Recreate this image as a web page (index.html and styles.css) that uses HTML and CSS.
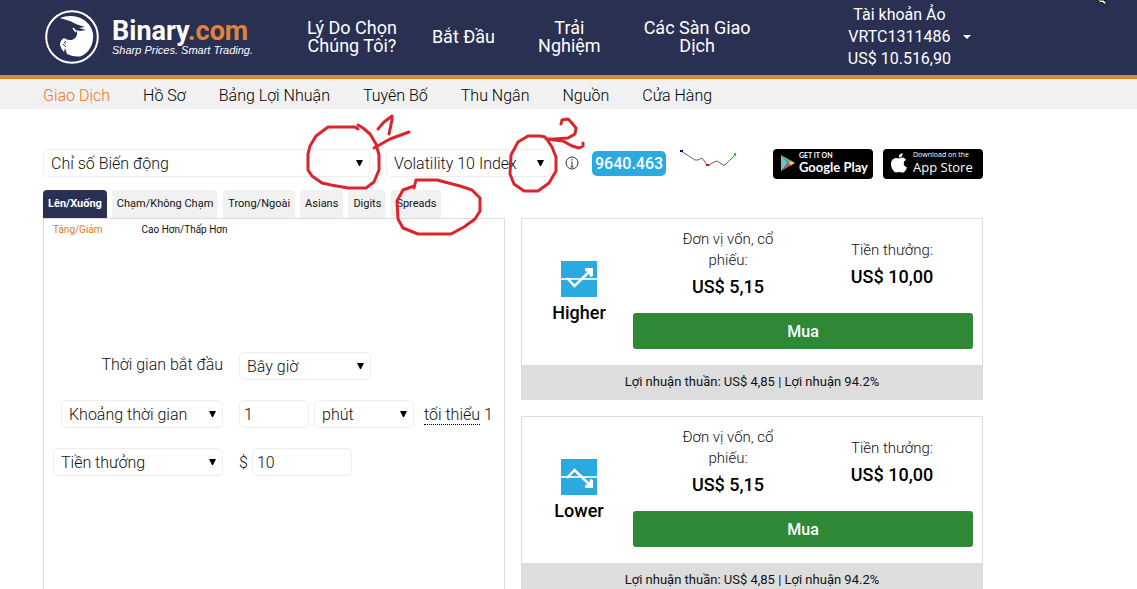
FILE: index.html
```html
<!DOCTYPE html>
<html lang="vi">
<head>
<meta charset="utf-8">
<title>Binary.com</title>
<link rel="stylesheet" href="styles.css">
</head>
<body>
<header class="header">
  <a class="logo" href="#">
    <svg class="logo-mark" viewBox="0 0 54 54" aria-hidden="true">
      <circle cx="27" cy="27" r="25.8" fill="none" stroke="#fff" stroke-width="2"/>
      <path fill="#fff" d="M15 8C22 5 32 5 39 10C46 15 49 22 48 29C47 38 42 44 35 46.500Q28 47 22 44L20 38L19 42Q16 39 15 35Q15 30 19 28Q23 31 28 29.500Q33 27 32 22L31 20L35 21L41 20L34 18L40 17L32 14.500Q24 10 15 8Z"/>
      <path d="M18 34l3 3M20 31v3" stroke="#2a3052" stroke-width="1"/>
      <path d="M28 18l3 4" stroke="#fff" stroke-width="1.500"/>
    </svg>
    <span class="logo-text">
      <span class="logo-name">Binary<span class="logo-com">.com</span></span>
      <span class="logo-tag">Sharp Prices. Smart Trading.</span>
    </span>
  </a>
  <nav class="main-nav">
    <a href="#">Lý Do Chọn<br>Chúng Tôi?</a>
    <a href="#">Bắt Đầu</a>
    <a href="#">Trải<br>Nghiệm</a>
    <a href="#">Các Sàn Giao<br>Dịch</a>
  </nav>
  <button class="account" type="button">
    <span class="account-text">Tài khoản Ảo<br>VRTC1311486<br>US$ 10.516,90</span>
    <span class="caret"></span>
  </button>
</header>
<nav class="sub-nav">
  <a class="active" href="#">Giao Dịch</a>
  <a href="#">Hồ Sơ</a>
  <a href="#">Bảng Lợi Nhuận</a>
  <a href="#">Tuyên Bố</a>
  <a href="#">Thu Ngân</a>
  <a href="#">Nguồn</a>
  <a href="#">Cửa Hàng</a>
</nav>
<main class="content">
  <div class="market-row">
    <div class="market-pick">
      <select class="field" aria-label="Thị trường"><option>Chỉ số Biến động</option></select>
    </div>
    <div class="underlying">
      <select class="field underlying-pick" aria-label="Tài sản"><option>Volatility 10 Index</option></select>
      <svg class="info" viewBox="0 0 14 14" aria-hidden="true"><circle cx="7" cy="7" r="6" fill="none" stroke="#333"/><path d="M7 3v1.500M6 6H7v5M5.500 11h3" fill="none" stroke="#333"/></svg>
      <span class="spot">9640.463</span>
      <svg class="spark" viewBox="0 0 60 20" aria-hidden="true">
        <path d="M3 3L17 12H20L24 10L29 17H31L36 14L39 13L45 17H47L57 7" fill="none" stroke="#666"/>
        <path d="M2 2h3v2H2z" fill="#00a"/><path d="M28 16h3v2h-3z" fill="#e00"/><path d="M56 5h2v3h-2z" fill="#1d1"/>
      </svg>
    </div>
    <div class="stores">
      <a class="store google" href="#">
        <svg viewBox="0 0 14 16" aria-hidden="true"><path d="M0 0v16l7-8z" fill="#62c6d0"/><path d="M0 0l10 5.500L7 8z" fill="#6fae8c"/><path d="M0 16l10-5.500L7 8z" fill="#c94f68"/><path d="M10 5.500L14 8l-4 2.500L7 8z" fill="#f4bb69"/></svg>
        <span class="store-text"><small>GET IT ON</small>Google Play</span>
      </a>
      <a class="store apple" href="#">
        <svg viewBox="0 0 16 20" aria-hidden="true"><path fill="#fff" d="M8 5.600C10 4.200 13 4 15 6.800C11.500 9 12.200 13.200 16 14.500C14.700 18 12.500 20.800 9.800 19.300Q8 18.600 6.300 19.300C3.500 20.600 0 15.500 0 11C0 5.800 4.500 3.700 8 5.600ZM8 4.500C7.700 2 9.500.3 11.500 0C11.900 2.300 10.200 4.400 8 4.500Z"/></svg>
        <span class="store-text"><small>Download on the</small>App Store</span>
      </a>
    </div>
  </div>
  <div class="trade">
    <section class="panel-side">
      <nav class="tabs">
        <a class="selected" href="#">Lên/Xuống</a>
        <a href="#">Chạm/Không Chạm</a>
        <a href="#">Trong/Ngoài</a>
        <a href="#">Asians</a>
        <a href="#">Digits</a>
        <a href="#">Spreads</a>
      </nav>
      <form class="panel">
        <div class="sub-tabs"><a class="active" href="#">Tăng/Giảm</a><a href="#">Cao Hơn/Thấp Hơn</a></div>
        <div class="form-grid">
          <label class="start-label" for="start">Thời gian bắt đầu</label>
          <div class="cell"><select class="field start" id="start"><option>Bây giờ</option></select></div>
          <select class="field expiry" aria-label="Loại thời hạn"><option>Khoảng thời gian</option></select>
          <div class="cell">
            <input class="field duration" aria-label="Khoảng thời gian" value="1">
            <select class="field unit" aria-label="Đơn vị"><option>phút</option></select>
            <span class="minimum"><span class="hint">tối thiểu</span> 1</span>
          </div>
          <select class="field amount-type" aria-label="Loại số tiền"><option>Tiền thưởng</option></select>
          <div class="cell tight"><label for="amount">$</label><input class="field amount" id="amount" value="10"></div>
        </div>
      </form>
    </section>
    <section class="contracts">
      <article class="card">
        <div class="card-body">
          <div class="kind">
            <svg viewBox="0 0 36 36" aria-hidden="true"><path fill="#2aaae1" d="M0 0h36v36H0z"/><path d="M0 18h36" stroke="#d8f0fb" stroke-width="2"/><path d="M6 17L13.500 25L29 10" fill="none" stroke="#fff" stroke-width="2.500"/><path d="M24 7l8 0 0 8-3 1-1-5-4-1z" fill="#fff"/></svg>
            Higher
          </div>
          <div class="offer">
            <div class="prices">
              <div>Đơn vị vốn, cổ<br>phiếu:<strong>US$ 5,15</strong></div>
              <div>Tiền thưởng:<strong>US$ 10,00</strong></div>
            </div>
            <button class="buy" type="button">Mua</button>
          </div>
        </div>
        <p class="profit">Lợi nhuận thuần: US$ 4,85 | Lợi nhuận 94.2%</p>
      </article>
      <article class="card">
        <div class="card-body">
          <div class="kind">
            <svg viewBox="0 0 36 36" aria-hidden="true"><path fill="#2aaae1" d="M0 0h36v36H0z"/><path d="M0 18h36" stroke="#d8f0fb" stroke-width="2"/><path d="M6 19L13.500 11L29 26" fill="none" stroke="#fff" stroke-width="2.500"/><path d="M24 29l8 0 0-8-3-1-1 5-4 1z" fill="#fff"/></svg>
            Lower
          </div>
          <div class="offer">
            <div class="prices">
              <div>Đơn vị vốn, cổ<br>phiếu:<strong>US$ 5,15</strong></div>
              <div>Tiền thưởng:<strong>US$ 10,00</strong></div>
            </div>
            <button class="buy" type="button">Mua</button>
          </div>
        </div>
        <p class="profit">Lợi nhuận thuần: US$ 4,85 | Lợi nhuận 94.2%</p>
      </article>
    </section>
  </div>
</main>
<svg class="markup" viewBox="0 0 1137 589" aria-hidden="true">
  <g fill="none" stroke="#d9262c" stroke-width="3" stroke-linecap="round" stroke-linejoin="round">
    <path d="M358 129L355 127H328L316 136L310 146L308 154V170L312 176L322 183L331 185L348 188H366L374 182L379 170V155L376 144L370 134L363 128L358 125"/>
    <path d="M378 129L384 122L392 116V120L389 134M374 148L390 139L409 132"/>
    <path d="M545 137L540 136L528 136L518 142L511 155L510 174L514 184L524 191H538L549 183L556 171L556 157L552 147L546 138V139H554L568 138L575 134L576 128L571 122L568 119L562 120L561 124M546 139L563 141L572 146L579 148L583 146V143"/>
    <path d="M414 188L416 180H437L460 186L472 190L480 198V211L475 219L464 227L451 234H418L403 228L398 219L397 201L403 190L414 186"/>
  </g>
  <path d="M1097 0h9l-2 0 3 4h-3l-2-2-1 1z" fill="#fff" stroke="#111"/>
</svg>
</body>
</html>
```
FILE: styles.css
```css
* { box-sizing: border-box; }
html { overflow: hidden; }
body { margin: 0; min-height: 100vh; display: flex; flex-direction: column; background: #fff; color: #111; font-family: Roboto, "Liberation Sans", sans-serif; font-size: 16px; font-weight: 300; }
a { color: inherit; text-decoration: none; }
button { border: 0; font: inherit; }

.header { display: flex; align-items: center; height: 79px; padding: 0 154px 1px 45px; background: #2a3052; border-bottom: 4px solid #e0833a; color: #fff; font-weight: 400; }
.logo { display: flex; align-items: center; gap: 13px; width: 262px; flex: none; }
.logo-mark { width: 54px; height: 54px; }
.logo-text { display: flex; flex-direction: column; }
.logo-name { font-size: 27px; line-height: 26px; font-weight: 700; }
.logo-com { color: #e0833a; }
.logo-tag { font: italic 11px/12px "Liberation Sans", sans-serif; }
.main-nav { display: flex; align-items: center; gap: 35px; flex: 1; text-align: center; font-size: 18px; line-height: 18px; white-space: nowrap; }
.main-nav a:nth-child(3) { margin: 0 8px; }
.account { display: flex; align-items: center; gap: 12px; margin-right: 12px; padding: 0; background: none; color: #fff; font-size: 16px; line-height: 22px; white-space: nowrap; }
.caret { border: 4px solid transparent; border-top-color: #fff; border-bottom: 0; }

.sub-nav { display: flex; align-items: center; gap: 33px; height: 30px; padding: 3px 43px 0; background: #f1f1f1; font-size: 16px; line-height: 20px; color: #000; white-space: nowrap; }
.active { color: #e87722; }

.content { display: flex; flex-direction: column; flex: 1; padding: 40px 154px 0 43px; }
.field { height: 28px; margin: 0; padding: 0 18px 0 7px; border: 1px solid #eee; border-radius: 5px; background: #fff; color: #111; font: inherit; appearance: none; outline: 0; }
select.field { background: #fff url("data:image/svg+xml,%3Csvg xmlns='http://www.w3.org/2000/svg' width='7' height='6'%3E%3Cpath d='M0 0h7L4 6H3z'/%3E%3C/svg%3E") no-repeat right 6px center; }
input.field { padding: 0 4px; }
.market-row { display: flex; align-items: flex-start; gap: 16px; height: 41px; }
.market-pick { flex: 0 0 327px; }
.market-pick .field { width: 100%; }
.underlying { display: flex; align-items: center; flex: 1; }
.underlying-pick { width: 165px; }
.info { width: 14px; height: 14px; margin: 0 13px 0 14px; }
.spot { padding: 0 3px; border-radius: 5px; background: #2aaae1; color: #fff; font-weight: 500; line-height: 25px; }
.spark { width: 60px; height: 20px; margin: -10px 0 0 12px; }
.stores { display: flex; gap: 10px; }
.store { display: flex; align-items: center; gap: 4px; width: 100px; height: 30px; padding: 0 0 2px 8px; border-radius: 4px; background: #000; color: #fff; font: 500 13px/16px "Open Sans", sans-serif; white-space: nowrap; }
.store-text { display: flex; flex-direction: column; }
.store small { font-size: 7px; line-height: 8px; }
.google { font-family: Lato, sans-serif; font-weight: 700; }
.google svg { width: 14px; height: 16px; }
.apple { gap: 6px; }
.apple svg { width: 16px; height: 20px; }

.trade { display: flex; gap: 16px; flex: 1; }
.panel-side { display: flex; flex-direction: column; flex: 1 1 0; min-width: 0; }
.tabs { display: flex; gap: 5px; height: 28px; font-size: 11px; line-height: 28px; font-weight: 400; white-space: nowrap; }
.tabs a { padding: 0 5px; border-radius: 4px 4px 0 0; background: #f1f1f1; }
.tabs .selected { background: #2a3052; color: #fff; font-weight: 700; }
.panel { flex: 1; border: 1px solid #ddd; border-bottom: 0; }
.sub-tabs { display: flex; gap: 39px; padding: 3px 9px; font-size: 10px; line-height: 16px; font-weight: 400; }
.form-grid { display: grid; grid-template-columns: 179px 1fr; column-gap: 16px; row-gap: 20px; justify-items: end; margin-top: 111px; }
.start-label { line-height: 26px; }
.cell { display: flex; align-items: center; gap: 5px; justify-self: start; white-space: nowrap; }
.tight { gap: 4px; }
.start { width: 132px; }
.expiry { width: 162px; }
.duration { width: 70px; }
.unit { width: 100px; }
.minimum { margin-left: 5px; }
.hint { border-bottom: 1px dotted #000; }
.amount-type { width: 170px; }
.amount { width: 100px; }

.contracts { display: flex; flex-direction: column; gap: 16px; flex: 1 1 0; margin-top: 28px; }
.card { display: flex; flex-direction: column; border: 1px solid #ddd; background: #fff; }
.card-body { display: flex; align-items: center; padding: 10px 9px 16px 3px; }
.kind { display: flex; flex-direction: column; align-items: center; flex: 0 0 108px; padding-top: 12px; color: #000; font-size: 18px; line-height: 32px; font-weight: 500; }
.kind svg { width: 36px; height: 36px; }
.offer { flex: 1; }
.prices { display: grid; grid-template-columns: 190px 1fr; align-items: center; height: 74px; margin-bottom: 10px; padding-right: 12px; font-size: 15px; line-height: 21px; text-align: center; }
.prices strong { display: block; color: #000; font-size: 18px; line-height: 32px; font-weight: 500; }
.buy { display: block; width: 100%; height: 36px; border-radius: 3px; background: #2e8836; color: #fff; font-weight: 500; }
.profit { margin: 0; background: #ddd; font-size: 13px; line-height: 34px; font-weight: 400; text-align: center; }
.markup { position: absolute; top: 0; left: 0; width: 1137px; height: 589px; pointer-events: none; }
```
